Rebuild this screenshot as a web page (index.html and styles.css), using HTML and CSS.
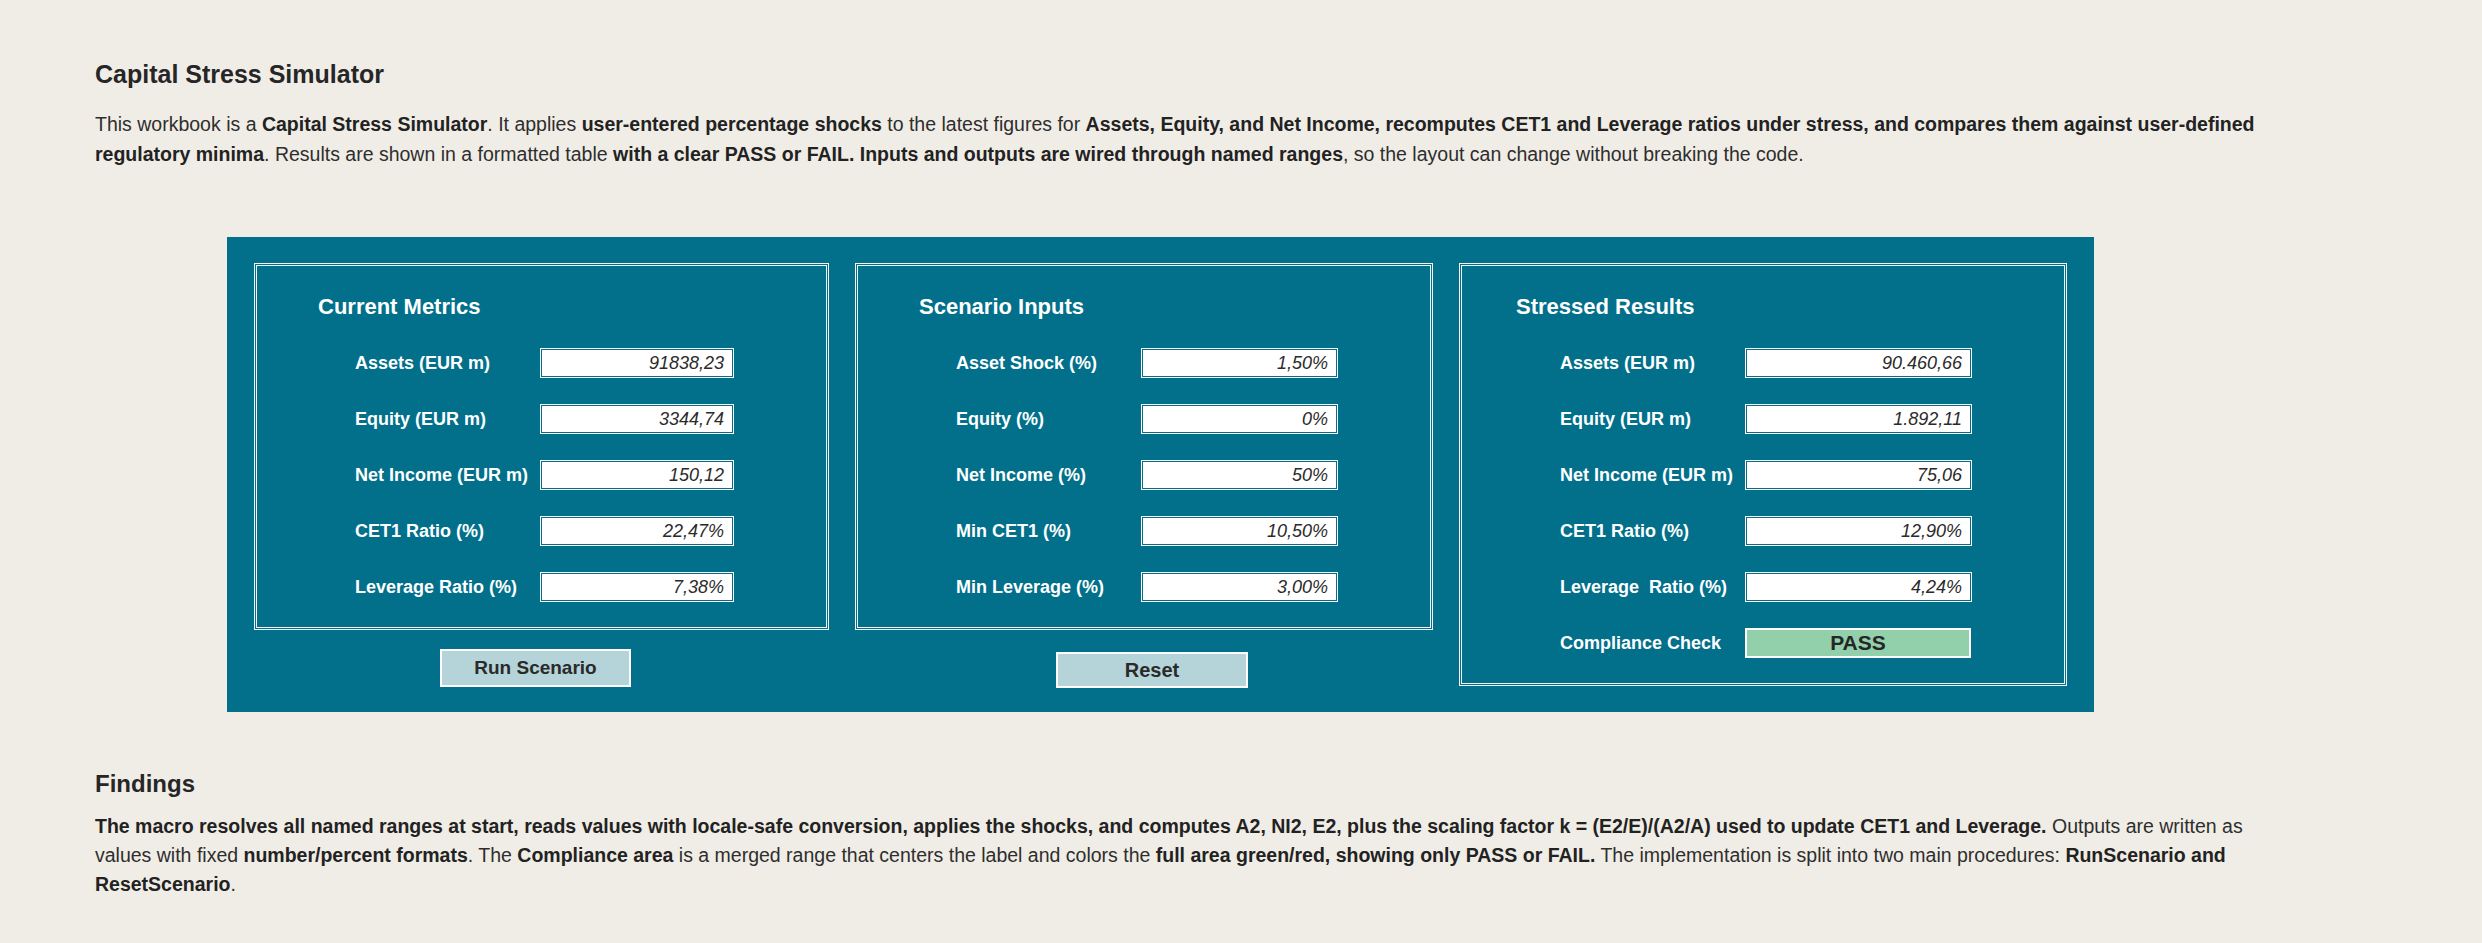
FILE: index.html
```html
<!DOCTYPE html>
<html lang="en">
<head>
<meta charset="utf-8">
<title>Capital Stress Simulator</title>
<link rel="stylesheet" href="styles.css">
</head>
<body>
<main class="page">
  <h1 class="heading heading-top">Capital Stress Simulator</h1>
  <p class="text text-intro">This workbook is a <b>Capital Stress Simulator</b>. It applies <b>user-entered percentage shocks</b> to the latest figures for <b>Assets, Equity, and Net Income, recomputes CET1 and Leverage ratios under stress, and compares them against user-defined<br>regulatory minima</b>. Results are shown in a formatted table <b>with a clear PASS or FAIL. Inputs and outputs are wired through named ranges</b>, so the layout can change without breaking the code.</p>

  <section class="panel">
    <div class="col">
      <div class="box box-1">
        <h2 class="box-title">Current Metrics</h2>
        <div class="rows">
          <div class="row"><span class="label">Assets (EUR m)</span><span class="value">91838,23</span></div>
          <div class="row"><span class="label">Equity (EUR m)</span><span class="value">3344,74</span></div>
          <div class="row"><span class="label">Net Income (EUR m)</span><span class="value">150,12</span></div>
          <div class="row"><span class="label">CET1 Ratio (%)</span><span class="value">22,47%</span></div>
          <div class="row"><span class="label">Leverage Ratio (%)</span><span class="value">7,38%</span></div>
        </div>
      </div>
      <button class="btn btn-run" type="button">Run Scenario</button>
    </div>

    <div class="col">
      <div class="box box-2">
        <h2 class="box-title">Scenario Inputs</h2>
        <div class="rows">
          <div class="row"><span class="label">Asset Shock (%)</span><span class="value">1,50%</span></div>
          <div class="row"><span class="label">Equity (%)</span><span class="value">0%</span></div>
          <div class="row"><span class="label">Net Income (%)</span><span class="value">50%</span></div>
          <div class="row"><span class="label">Min CET1 (%)</span><span class="value">10,50%</span></div>
          <div class="row"><span class="label">Min Leverage (%)</span><span class="value">3,00%</span></div>
        </div>
      </div>
      <button class="btn btn-reset" type="button">Reset</button>
    </div>

    <div class="col">
      <div class="box box-3">
        <h2 class="box-title">Stressed Results</h2>
        <div class="rows">
          <div class="row"><span class="label">Assets (EUR m)</span><span class="value">90.460,66</span></div>
          <div class="row"><span class="label">Equity (EUR m)</span><span class="value">1.892,11</span></div>
          <div class="row"><span class="label">Net Income (EUR m)</span><span class="value">75,06</span></div>
          <div class="row"><span class="label">CET1 Ratio (%)</span><span class="value">12,90%</span></div>
          <div class="row"><span class="label">Leverage&nbsp; Ratio (%)</span><span class="value">4,24%</span></div>
          <div class="row"><span class="label">Compliance Check</span><span class="value value-pass">PASS</span></div>
        </div>
      </div>
    </div>
  </section>

  <h1 class="heading heading-findings">Findings</h1>
  <p class="text text-findings"><b>The macro resolves all named ranges at start, reads values with locale-safe conversion, applies the shocks, and computes A2, NI2, E2, plus the scaling factor k = (E2/E)/(A2/A) used to update CET1 and Leverage.</b> Outputs are written as<br>values with fixed <b>number/percent formats</b>. The <b>Compliance area</b> is a merged range that centers the label and colors the <b>full area green/red, showing only PASS or FAIL.</b> The implementation is split into two main procedures: <b>RunScenario and<br>ResetScenario</b>.</p>
</main>
</body>
</html>
```

FILE: styles.css
```css
* { box-sizing: border-box; }

html, body {
  margin: 0;
  padding: 0;
}

body {
  background: #f0ede6;
  color: #262626;
  font-family: "Liberation Sans", Arial, sans-serif;
  width: 2482px;
  height: 943px;
  overflow: hidden;
}

.page {
  padding: 60px 0 0 95px;
}

.heading {
  margin: 0;
  font-size: 24px;
  line-height: 28px;
  font-weight: 700;
  color: #262626;
}

.heading-top { font-size: 25px; }

.text {
  margin: 0;
  font-size: 19.5px;
  line-height: 30px;
  font-weight: 400;
  color: #2e2e2e;
  white-space: nowrap;
}

.text b { font-weight: 700; color: #222; }

.text-intro { margin-top: 21px; }

.panel {
  margin: 68px 0 0 132px;
  width: 1867px;
  height: 475px;
  background: #02708a;
  display: grid;
  grid-template-columns: 575px 578px 608px;
  column-gap: 26px;
  align-items: start;
  padding: 26px 0 0 27px;
}

.col {
  display: flex;
  flex-direction: column;
  align-items: flex-start;
}

.box {
  width: 100%;
  border: 3px double #f4f6f6;
  padding: 27px 0 25px 0;
}

.box-title {
  margin: 0;
  font-size: 22px;
  line-height: 28px;
  font-weight: 700;
  color: #ffffff;
  padding-left: 61px;
}

.box-3 .box-title { padding-left: 54px; }

.rows {
  margin-top: 27px;
  display: flex;
  flex-direction: column;
  gap: 26px;
  padding-left: 98px;
}

.row {
  display: flex;
  align-items: center;
  height: 30px;
}

.label {
  width: 185px;
  flex: none;
  color: #ffffff;
  font-weight: 700;
  font-size: 18px;
  white-space: nowrap;
}

.value {
  height: 30px;
  width: 194px;
  background: #ffffff;
  border: 1px solid #ffffff;
  box-shadow: inset 0 0 0 1px #02708a;
  font-style: italic;
  font-size: 18px;
  line-height: 28px;
  text-align: right;
  padding-right: 9px;
  color: #2b2b2b;
}

.box-2 .value { width: 197px; }
.box-3 .value { width: 227px; }

.box-3 .value.value-pass {
  width: 226px;
  background: #92d0ab;
  border: 2px solid #ffffff;
  box-shadow: none;
  font-style: normal;
  font-weight: 700;
  font-size: 21px;
  text-align: center;
  padding-right: 0;
  line-height: 26px;
  color: #262626;
}

.btn {
  margin-top: 19px;
  height: 38px;
  background: #b5d4d9;
  border: 2px solid #ffffff;
  font-family: inherit;
  font-weight: 700;
  font-size: 19px;
  color: #2a2a2a;
  padding: 0;
  cursor: pointer;
}

.btn-run { width: 191px; margin-left: 186px; }
.btn-reset { width: 192px; margin-left: 201px; margin-top: 22px; height: 36px; font-size: 20px; }

.heading-findings { margin-top: 58px; }

.text-findings { margin-top: 14px; line-height: 29px; }
```
